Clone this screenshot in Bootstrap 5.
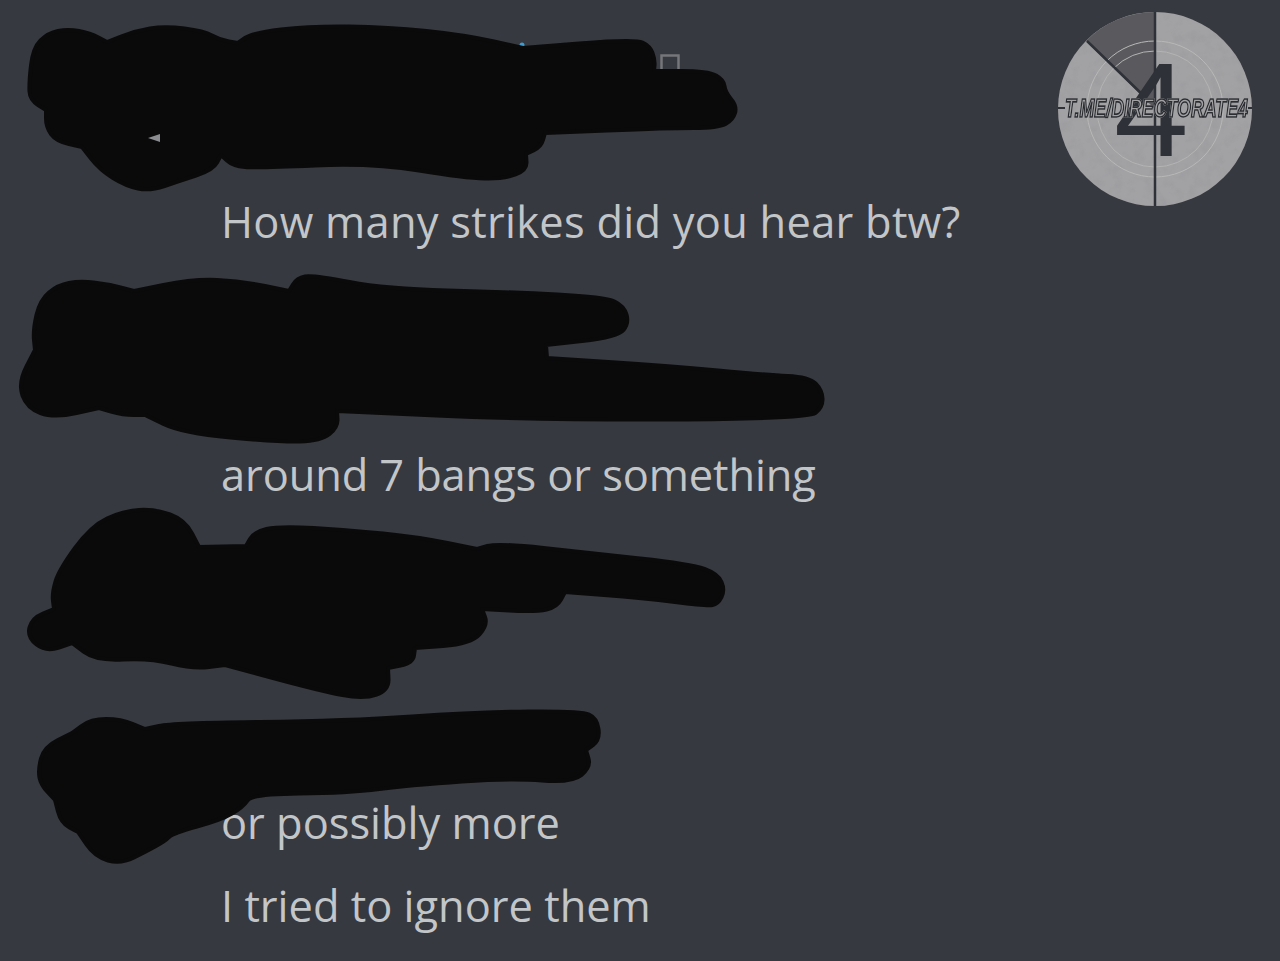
<!DOCTYPE html>
<html lang="en">
<head>
  <meta charset="UTF-8">
  <title>Chat</title>
  <meta name="viewport" content="width=device-width, initial-scale=1">
  <link href="https://cdn.jsdelivr.net/npm/bootstrap@5.3.3/dist/css/bootstrap.min.css" rel="stylesheet">
  <style>
    body { background: #36393f; overflow: hidden; }
    .chat-page { width: 1280px; height: 961px; padding-top: 198px; padding-left: 221px; }
    .chat-line { color: #c3c6c9; font-family: "Open Sans", sans-serif; font-size: 43.4px; line-height: 48px; margin: 0; white-space: nowrap; }
    .line-1 { letter-spacing: .27px; }
    .line-2 { margin-top: 205px; letter-spacing: -.1px; }
    .line-3 { margin-top: 300px; }
    .line-4 { margin-top: 35px; }
    .scrawl-layer { position: absolute; top: 0; left: 0; width: 1280px; height: 961px; pointer-events: none; }
    .scrawl-fill { fill: #0a0a0b; stroke: #0a0a0b; stroke-width: 4; stroke-linejoin: round; }
    .watermark { position: absolute; top: 10px; left: 1056px; width: 198px; height: 198px; }
    .wm-four { font-family: "Liberation Sans", sans-serif; font-size: 134px; fill: #2e3137; }
    .wm-label { font-family: "Liberation Sans", sans-serif; font-weight: 700; font-style: italic; font-size: 25px; fill: #a2a2a4; stroke: #2a2c31; stroke-width: 1.6; filter: drop-shadow(0 0 .7px #d8d8d8); }
  </style>
</head>
<body>

  <div class="chat-page position-relative">
    <p class="chat-line line-1">How many strikes did you hear btw?</p>
    <p class="chat-line line-2">around 7 bangs or something</p>
    <p class="chat-line line-3">or possibly more</p>
    <p class="chat-line line-4">I tried to ignore them</p>

    <!-- redaction scribbles over the names and avatars -->
    <svg class="scrawl-layer" viewBox="0 0 1280 961">
      <rect x="661.5" y="55.5" width="17" height="18" fill="none" stroke="#74767b" stroke-width="2.5"/>
      <circle cx="522" cy="45" r="2.5" fill="#3f9bd0"/>
      <g id="scrawls"></g>
      <path d="M148 138 L160 134 L160 142 Z" fill="#8a8c90"/>
    </svg>

    <!-- channel watermark -->
    <svg class="watermark" viewBox="0 0 198 198">
      <defs>
        <filter id="grain" x="0" y="0" width="100%" height="100%">
          <feTurbulence type="fractalNoise" baseFrequency=".09" numOctaves="4" seed="7"/>
          <feColorMatrix values="0 0 0 0 .32  0 0 0 0 .32  0 0 0 0 .34  0 0 0 1.8 -.8"/>
          <feComposite in2="SourceGraphic" operator="in"/>
        </filter>
      </defs>
      <circle cx="99" cy="99" r="97" fill="#a2a2a4"/>
      <circle cx="99" cy="99" r="97" filter="url(#grain)" opacity=".7"/>
      <path d="M99 99 L99 2 A97 97 0 0 0 30 31 Z" fill="#5a5a5e"/>
      <circle cx="99" cy="99" r="68" fill="none" stroke="#b8b8b8" stroke-width="1"/>
      <circle cx="99" cy="99" r="58" fill="none" stroke="#b4b4b4" stroke-width="1"/>
      <path d="M99 2 V196 M31 31 L88 86" stroke="#2e3137" stroke-width="2.5"/>
      <path d="M2 98 H9 M192 98 H196" stroke="#2e3137" stroke-width="2"/>
      <text class="wm-four" x="58" y="146">4</text>
      <text class="wm-label" x="9" y="107" textLength="183" lengthAdjust="spacingAndGlyphs">T.ME/DIRECTORATE4</text>
    </svg>
  </div>

  <script>
    // third value marks a notch where two marker strokes meet
    const blots = [
      [[29,83],[33,48],[48,33],[68,29],[90,33],[107,42,1],[135,31],[165,26],[204,31],[220,40],[238,43,1],[252,33],[310,26],[388,27],[465,35],[523,48,1],[635,39],[650,46],[655,60],[654,71,1],[708,71],[724,80],[725,92],[737,106],[733,120],[718,128],[669,128],[545,133,1],[541,147],[526,154,1],[527,170],[504,179],[465,178],[373,163],[257,168],[233,166],[221,155,1],[213,170],[179,181],[150,191],[126,186],[100,170],[82,147,1],[56,141],[46,127],[46,110,1],[30,100]],
      [[33,330],[40,300],[58,285],[80,281],[107,284],[134,291,1],[193,279],[241,281],[289,291,1],[297,278],[313,275],[386,289],[509,292],[605,297],[624,306],[629,323],[618,337],[546,345,1],[547,358,1],[670,366],[766,375],[809,377],[822,390],[823,407],[808,419],[536,420],[337,411,1],[338,427],[321,441],[279,442],[182,433],[145,415,1],[123,415],[99,408,1],[54,418],[27,408],[18,383],[35,350,1]],
      [[52,593],[59,570],[91,526],[123,511],[155,509],[185,520],[199,547,1],[246,546,1],[254,532],[279,526],[348,530],[418,537],[477,549,1],[498,543],[589,553],[691,564],[718,574],[725,590],[718,604],[707,606],[643,598],[565,592,1],[557,607],[536,612],[482,609,1],[488,625],[471,644],[415,648,1],[413,663],[388,668,1],[389,690],[364,699],[321,691],[225,665,1],[193,669],[150,658],[96,661],[72,643,1],[46,652],[27,637],[32,618],[54,609,1]],
      [[38,770],[44,747],[72,733,1],[91,719],[121,719],[145,729,1],[173,723],[347,721],[477,712],[581,711],[597,718],[600,740],[586,750,1],[591,767],[572,783],[512,778],[412,785],[347,793],[252,794],[243,807],[221,820],[173,833],[165,841],[147,851],[121,864],[95,857],[78,832,1],[61,823],[55,800,1],[41,785]]
    ];

    // closed curve through the midpoints, so the marker edge stays round
    function blotPath(raw) {
      const pts = raw.flatMap(p => p[2] ? [p, p] : [p]);
      const mid = (a, b) => [(a[0] + b[0]) / 2, (a[1] + b[1]) / 2];
      let start = mid(pts[pts.length - 1], pts[0]);
      let d = `M${start[0]} ${start[1]}`;
      pts.forEach((p, i) => {
        const m = mid(p, pts[(i + 1) % pts.length]);
        d += ` Q${p[0]} ${p[1]} ${m[0]} ${m[1]}`;
      });
      return d + "Z";
    }

    document.getElementById("scrawls").innerHTML = blots
      .map(pts => `<path class="scrawl-fill" d="${blotPath(pts)}"/>`)
      .join("");
  </script>

  <script src="https://cdn.jsdelivr.net/npm/bootstrap@5.3.3/dist/js/bootstrap.bundle.min.js"></script>
</body>
</html>
